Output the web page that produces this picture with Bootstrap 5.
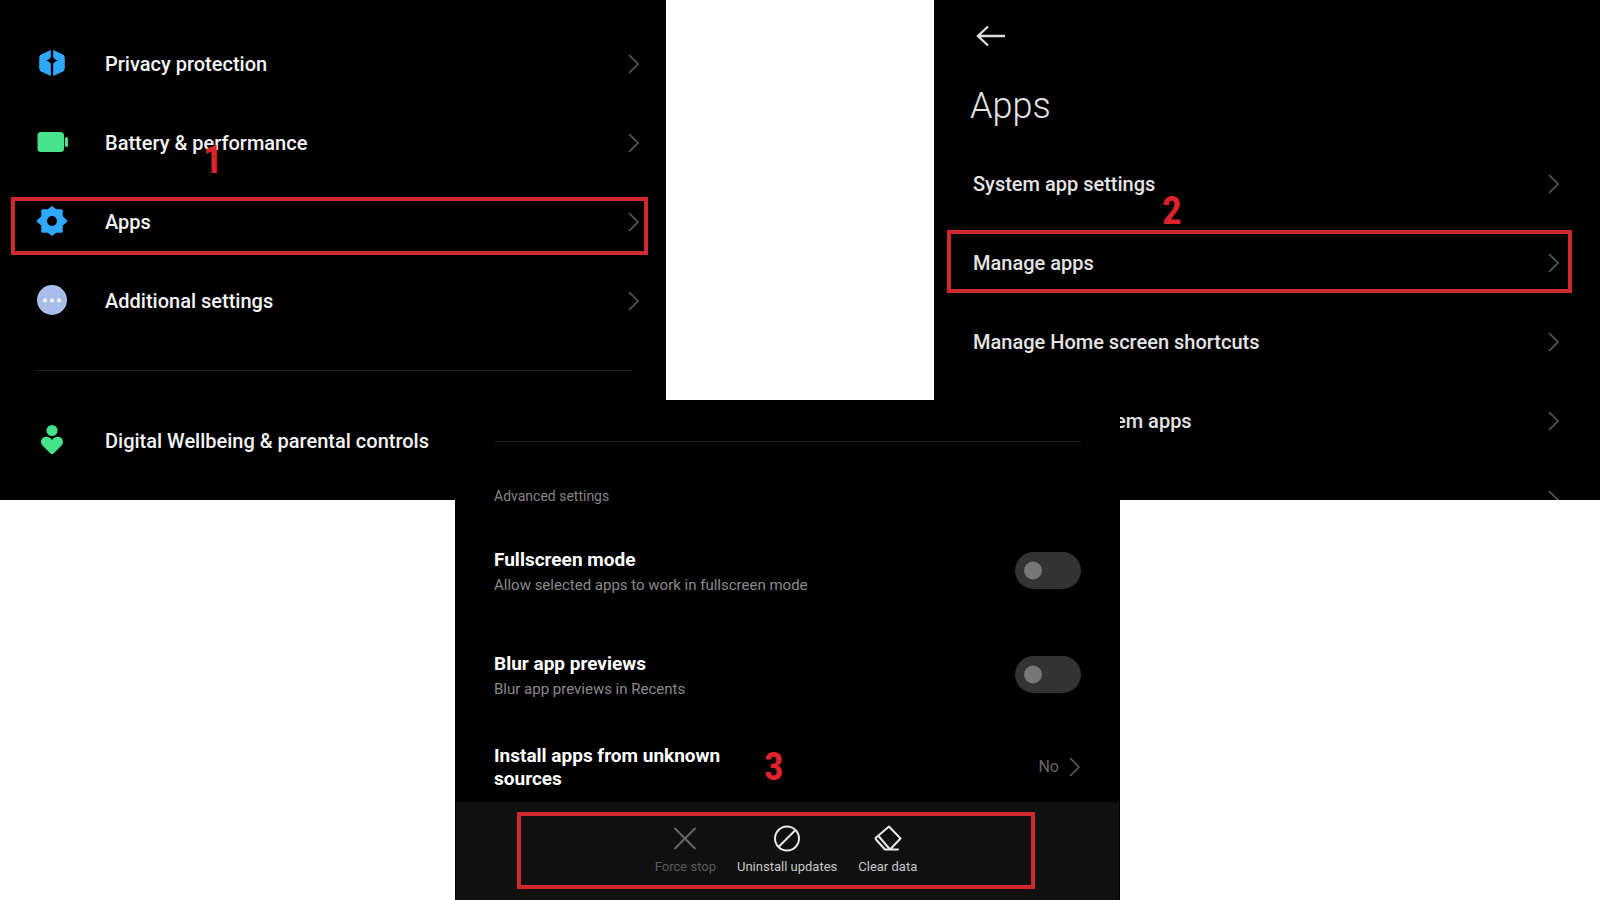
<!DOCTYPE html>
<html lang="en">
<head>
<meta charset="utf-8">
<meta name="viewport" content="width=device-width, initial-scale=1">
<title>Managing apps in Settings</title>
<link href="https://cdn.jsdelivr.net/npm/bootstrap@5.3.0/dist/css/bootstrap.min.css" rel="stylesheet">
<style>
body { font-family: Roboto, "Liberation Sans", sans-serif; background: #fff; }
a, a:hover { color: inherit; text-decoration: none; }
/* Three phone screens, the middle one laid over the lower corners of the others */
.screens { display: grid; grid-template-columns: 455fr 211fr 268fr 186fr 480fr; grid-template-rows: 400px 100px auto; }
.screen { background: #000; color: #f4f4f4; min-width: 0; }
.screen-one { grid-area: 1 / 1 / 3 / 3; padding: 24px 26px 20px 35px; }
.screen-two { grid-area: 1 / 4 / 3 / 6; padding: 0 40px 0 36px; overflow: hidden; color: #e4e4e4; }
.screen-three { grid-area: 2 / 2 / 4 / 5; z-index: 1; }
.item { position: relative; height: 79px; font-size: 20px; line-height: 24px; font-weight: 500; white-space: nowrap; }
.screen-two .item { padding-left: 3px; }
.item-icon { width: 34px; height: 34px; margin-right: 36px; flex: none; }
.chev { width: 12px; height: 20px; flex: none; fill: none; stroke: #5c5c5c; stroke-width: 1.6; }
.rule { height: 1px; margin: 0; border: 0; opacity: 1; background: #1e1e1e; }
.screen-one .rule { margin: 30px 8px 30px 0; }
.frame { position: absolute; border: 4px solid #d0282f; pointer-events: none; }
.frame-one { inset: 15px -8px 6px -24px; }
.frame-two { inset: 7px -12px 9px -23px; }
.frame-three { inset: 10px 84px 11px 61px; }
.step { position: absolute; z-index: 2; color: #dd232b; font-family: "Roboto Condensed", Roboto, sans-serif; font-weight: 700; font-size: 39px; line-height: 40px; }
.step-one { left: 168px; top: 37px; }
.step-two { left: 192px; top: 47px; }
.step-three { left: 270px; top: 3px; }
.back { height: 72px; padding: 0 0 0 6px; border: 0; background: none; }
.title { margin: 0 0 4px; font-size: 36px; line-height: 68px; font-weight: 300; }
.covered { padding-left: 142px; }
.screen-body { padding: 41px 39px 12px; }
.caption { margin: 44px 0 42px; font-size: 14px; line-height: 20px; font-weight: 400; color: #858585; }
.pair { height: 104px; }
.pair-last { height: 92px; }
.pair-title { display: block; font-size: 19px; line-height: 23px; font-weight: 700; color: #fff; }
.pair-note { display: block; margin-top: 3px; font-size: 15px; line-height: 22px; color: #8a8a8a; }
.install { position: relative; }
.install-label { max-width: 240px; }
.value { font-size: 16px; color: #666; margin-right: 10px; }
.screen .form-switch .form-check-input { float: none; display: block; width: 66px; height: 37px; margin: 4px 0 0; border: 0; background-color: #333; background-size: 35px 37px; box-shadow: none;
  background-image: url("data:image/svg+xml,%3Csvg xmlns='http://www.w3.org/2000/svg' viewBox='0 0 35 37'%3E%3Ccircle cx='18' cy='18.5' r='9' fill='%23777'/%3E%3C/svg%3E"); }
.actions { position: relative; height: 98px; padding: 21px 3px 0 0; gap: 21px; background: #101010; margin: 0 1px; }
.act { border: 0; background: none; padding: 0; color: #c8c8c8; font-size: 13px; line-height: 20px; }
.act svg { display: block; width: 30px; height: 30px; margin: 0 auto 4px; fill: none; stroke: #e8e8e8; stroke-width: 2; }
.act:disabled { color: #5c5c5c; }
.act:disabled svg { stroke: #666; }
</style>
</head>
<body>
<main class="screens">
  <section class="screen screen-one">
    <a class="item d-flex align-items-center" href="#"><svg class="item-icon" viewBox="0 0 34 34" fill="#2fa8ff"><path d="M15.800 3 6 7.500Q4.200 8.500 4.200 11v10q0 2.500 1.800 3.500l9.800 4.500V17q-1-2.500-5-3.500 4-1 5-3.500zM18.200 3 28 7.500q1.800 1 1.800 3.500v10q0 2.500-1.800 3.500L18.200 29V17q1-2.500 5-3.500-4-1-5-3.500z"/></svg><span class="flex-grow-1">Privacy protection</span><svg class="chev" viewBox="0 0 12 20"><path d="M1 1l9 9-9 9"/></svg></a>
    <a class="item d-flex align-items-center" href="#"><svg class="item-icon" viewBox="0 0 34 34" fill="#45e38b"><rect x="2.500" y="6" width="26.500" height="20" rx="3.500"/><rect x="30" y="11" width="3" height="10" rx="1.500"/></svg><span class="flex-grow-1">Battery &amp; performance</span><svg class="chev" viewBox="0 0 12 20"><path d="M1 1l9 9-9 9"/></svg><span class="step step-one">1</span></a>
    <a class="item d-flex align-items-center" href="#"><svg class="item-icon" viewBox="0 0 34 34"><path d="M17 2.500 20.500 5.500h6V12L31 16l-4.500 4v6.500h-6L17 29.500l-3.500-3h-6V20L3 16l4.500-4V5.500h6z" fill="#2fa8ff" stroke="#2fa8ff" stroke-width="2.500" stroke-linejoin="round"/><circle cx="17" cy="16" r="5" fill="#000"/></svg><span class="flex-grow-1">Apps</span><svg class="chev" viewBox="0 0 12 20"><path d="M1 1l9 9-9 9"/></svg><span class="frame frame-one"></span></a>
    <a class="item d-flex align-items-center" href="#"><svg class="item-icon" viewBox="0 0 34 34" fill="#fff"><circle cx="17" cy="16" r="15" fill="#a9bdea"/><circle cx="10" cy="16.500" r="2"/><circle cx="17" cy="16.500" r="2"/><circle cx="24" cy="16.500" r="2"/></svg><span class="flex-grow-1">Additional settings</span><svg class="chev" viewBox="0 0 12 20"><path d="M1 1l9 9-9 9"/></svg></a>
    <hr class="rule">
    <a class="item d-flex align-items-center" href="#"><svg class="item-icon" viewBox="0 0 34 34" fill="#45e38b"><circle cx="17" cy="6.500" r="5.500"/><path d="M17 16c3-5 11-4 11 2 0 2-1 3-2 4l-7.500 7.500q-1.500 1.500-3 0L8 22c-1-1-2-2-2-4 0-6 8-7 11-2z"/></svg><span>Digital Wellbeing &amp; parental controls</span></a>
  </section>

  <section class="screen screen-two">
    <button class="back d-flex align-items-center" type="button" aria-label="Back"><svg width="30" height="22" viewBox="0 0 30 22" fill="none" stroke="#ddd" stroke-width="2.400"><path d="M29 11H2M12 1.500 2 11l10 9.500"/></svg></button>
    <h1 class="title">Apps</h1>
    <a class="item d-flex align-items-center" href="#"><span class="flex-grow-1">System app settings</span><svg class="chev" viewBox="0 0 12 20"><path d="M1 1l9 9-9 9"/></svg><span class="step step-two">2</span></a>
    <a class="item d-flex align-items-center" href="#"><span class="flex-grow-1">Manage apps</span><svg class="chev" viewBox="0 0 12 20"><path d="M1 1l9 9-9 9"/></svg><span class="frame frame-two"></span></a>
    <a class="item d-flex align-items-center" href="#"><span class="flex-grow-1">Manage Home screen shortcuts</span><svg class="chev" viewBox="0 0 12 20"><path d="M1 1l9 9-9 9"/></svg></a>
    <a class="item d-flex align-items-center" href="#"><span class="flex-grow-1 covered">em apps</span><svg class="chev" viewBox="0 0 12 20"><path d="M1 1l9 9-9 9"/></svg></a>
    <div class="item d-flex align-items-center justify-content-end"><svg class="chev" viewBox="0 0 12 20"><path d="M1 1l9 9-9 9"/></svg></div>
  </section>

  <section class="screen screen-three">
    <div class="screen-body">
      <hr class="rule">
      <h2 class="caption">Advanced settings</h2>
      <div class="pair d-flex justify-content-between align-items-start">
        <label for="fullscreen"><span class="pair-title">Fullscreen mode</span><span class="pair-note">Allow selected apps to work in fullscreen mode</span></label>
        <div class="form-switch p-0"><input class="form-check-input" type="checkbox" role="switch" id="fullscreen"></div>
      </div>
      <div class="pair pair-last d-flex justify-content-between align-items-start">
        <label for="blur"><span class="pair-title">Blur app previews</span><span class="pair-note">Blur app previews in Recents</span></label>
        <div class="form-switch p-0"><input class="form-check-input" type="checkbox" role="switch" id="blur"></div>
      </div>
      <a class="install d-flex align-items-center" href="#">
        <span class="pair-title install-label">Install apps from unknown sources</span>
        <span class="value ms-auto">No</span>
        <svg class="chev" viewBox="0 0 12 20"><path d="M1 1l9 9-9 9"/></svg>
        <span class="step step-three">3</span>
      </a>
    </div>
    <div class="actions d-flex justify-content-center align-items-start">
      <button class="act" type="button" disabled><svg viewBox="0 0 30 30"><path d="M5 5.500l20 20M25 5.500l-20 20" stroke-linecap="round"/></svg>Force stop</button>
      <button class="act" type="button"><svg viewBox="0 0 30 30"><circle cx="15" cy="15.500" r="12"/><path d="M23.500 7l-17 17"/></svg>Uninstall updates</button>
      <button class="act" type="button"><svg viewBox="0 0 30 30" stroke-linejoin="round" stroke-linecap="round"><path d="M16 3.500 27.500 15.500 17 26.500h-5L3 16.500 2.500 15zM5.500 13 17 26.500H25"/></svg>Clear data</button>
      <span class="frame frame-three"></span>
    </div>
  </section>
</main>
<script src="https://cdn.jsdelivr.net/npm/bootstrap@5.3.0/dist/js/bootstrap.bundle.min.js"></script>
</body>
</html>
